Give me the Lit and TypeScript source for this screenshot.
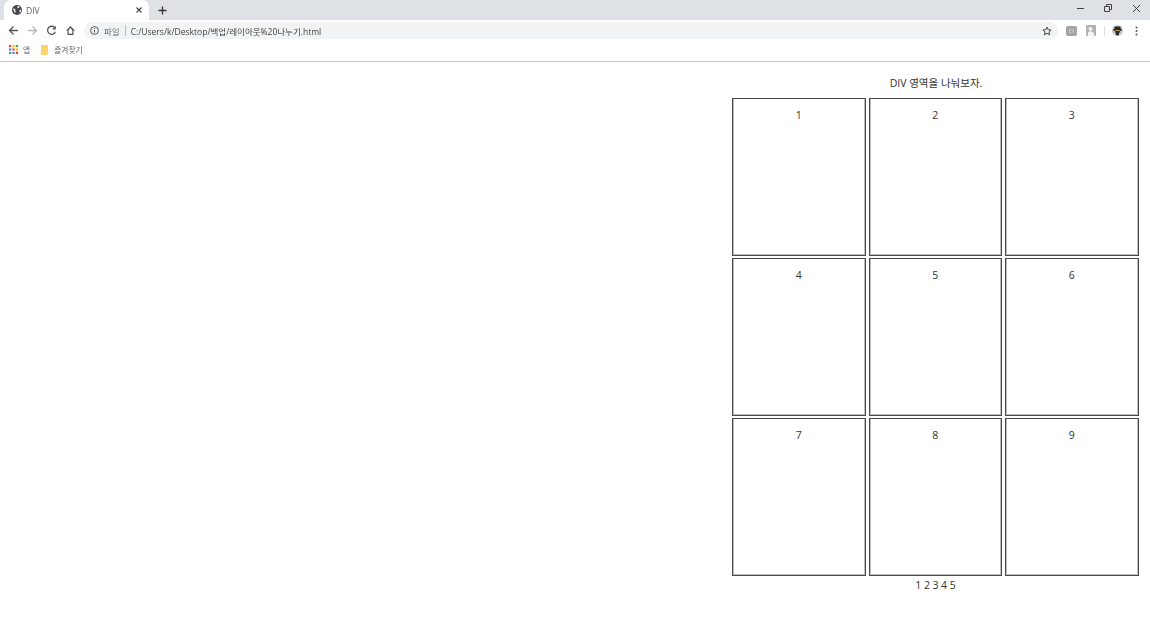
import { LitElement, html, css, svg } from "lit";
import { customElement } from "lit/decorators.js";

@customElement("app-root")
export class AppRoot extends LitElement {
  static styles = css`
    :host { display: block; width: 1150px; height: 629px; overflow: hidden; background: #fff;
      font-family: "Open Sans", "Noto Sans", "Noto Sans CJK KR", sans-serif; color: #222; }
    svg { display: block; flex: none; }
    .chrome { filter: blur(0.3px); }
    .tabstrip { height: 20px; background: #dee1e6; display: flex; position: relative; }
    .tab { width: 145px; margin-left: 4px; height: 20px; background: #fff; border-radius: 7px 7px 0 0;
      display: flex; align-items: center; box-sizing: border-box; padding: 0 6px 0 8px; }
    .tab-title { font-size: 8.5px; color: #5f6368; margin-left: 4px; flex: 1; }
    .plus { margin-left: 8.500px; margin-top: 5.500px; }
    .winctl { margin-left: auto; display: flex; align-items: flex-start; }
    .winbtn { width: 28px; height: 16px; display: flex; align-items: center; justify-content: center; }
    .toolbar { height: 21px; background: #fff; display: flex; align-items: center; padding-left: 8px; }
    .nav { width: 19px; display: flex; justify-content: flex-start; }
    .omni { width: 974px; height: 17px; background: #f1f3f4; border-radius: 9px; display: flex;
      align-items: center; box-sizing: border-box; padding: 0 6px; font-size: 8.5px; color: #444; }
    .file { margin-left: 5px; color: #666; }
    .sep { width: 1px; height: 11px; background: #bdc1c6; margin: 0 5px; }
    .url { flex: 1; }
    .exts { display: flex; align-items: center; margin-left: 5px; }
    .ext1 { width: 11px; height: 10px; background: #a3a5a8; border-radius: 2px; margin-left: 3px; color: #d8d8d8;
      font-size: 5px; text-align: center; line-height: 10px; }
    .ext2 { margin-left: 9px; }
    .tsep { width: 1px; height: 10px; background: #dadce0; margin-left: 8px; }
    .avatar { margin-left: 7px; }
    .dots { margin-left: 12px; }
    .bookmarks { height: 17px; padding-bottom: 3px; background: #fff; border-bottom: 1px solid #c8c8c8; display: flex;
      align-items: center; padding-left: 9px; font-size: 7.75px; color: #666; }
    .bm-apps { margin-right: 5px; }
    .bm-folder { margin-left: 10px; margin-right: 5px; }
    .page { display: flex; justify-content: flex-end; padding-right: 11px; }
    .panel { width: 407px; font-size: 10.5px; text-align: center; color: #333; }
    .title { height: 36px; line-height: 42px; padding-left: 1px; }
    .grid { display: grid; grid-template-columns: repeat(3, 133.5px); grid-auto-rows: 158px; gap: 2px 3px; }
    .cell { border: 1px solid #4a4a4a; box-shadow: inset 1px -1px 0 #bcbcbc, inset -1px 0 0 #bcbcbc;
      box-sizing: border-box; padding-top: 8px; line-height: 17px; }
    .pager { margin-top: 1px; line-height: 17px; display: flex; justify-content: center; gap: 2.6px; }
  `;

  render() {
    const appColors = ["#ea4335", "#fbbc04", "#34a853", "#4285f4", "#ea4335", "#fbbc04", "#34a853", "#4285f4", "#ea4335"];
    return html`
      <div class="chrome">
        <div class="tabstrip">
          <div class="tab">
            <svg width="10" height="10" viewBox="0 0 10 10">
              <circle cx="5" cy="5" r="5" fill="#45494e"/>
              <path d="M5.500 1l2 .5-.5 1.300-1.500.5zM7.500 5l1.800-.3-.5 2-1 1.300zM1.200 3.500l1.500.3.800 1.200-.3 1 .6 2-1.300-.7-1-2.300z" fill="#fff"/>
            </svg>
            <span class="tab-title">DIV</span>
            <svg width="8" height="8" viewBox="0 0 8 8"><path d="M1.500 1.500l5 5M6.500 1.500l-5 5" stroke="#444" stroke-width="1.100"/></svg>
          </div>
          <svg class="plus" width="9" height="9" viewBox="0 0 9 9"><path d="M4.500 .5v8M.5 4.500h8" stroke="#333" stroke-width="1.300"/></svg>
          <div class="winctl">
            <div class="winbtn"><svg width="8" height="8" viewBox="0 0 8 8"><path d="M1 4.500h7" stroke="#444"/></svg></div>
            <div class="winbtn"><svg width="8" height="8" viewBox="0 0 8 8"><path d="M.5 2.500h5v5h-5zM2.500 2.500V.5h5v5h-2" fill="none" stroke="#444"/></svg></div>
            <div class="winbtn"><svg width="9" height="9" viewBox="0 0 9 9"><path d="M1 1l7 7M8 1l-7 7" stroke="#444"/></svg></div>
          </div>
        </div>
        <div class="toolbar">
          <div class="nav"><svg width="11" height="11" viewBox="0 0 11 11"><path d="M10 5.500H1.500M5.500 1.500l-4 4 4 4" fill="none" stroke="#555" stroke-width="1.300"/></svg></div>
          <div class="nav"><svg width="11" height="11" viewBox="0 0 11 11"><path d="M1 5.500h8.500M5.500 1.500l4 4-4 4" fill="none" stroke="#b8babd" stroke-width="1.300"/></svg></div>
          <div class="nav"><svg width="11" height="11" viewBox="0 0 11 11"><path d="M9.300 6.800A4 4 0 1 1 8.500 2.500" fill="none" stroke="#555" stroke-width="1.300"/><path d="M9.800 .8v3.700H6.100z" fill="#555"/></svg></div>
          <div class="nav"><svg width="11" height="11" viewBox="0 0 11 11"><path d="M5.500 1L1 5.500h1.500v4.500h6V5.500H10zM3.700 8.800V5l1.800-2 1.800 2v3.800z" fill="#555" fill-rule="evenodd"/></svg></div>
          <div class="omni">
            <svg width="9" height="9" viewBox="0 0 9 9"><circle cx="4.500" cy="4.500" r="3.900" fill="none" stroke="#555"/><path d="M4.500 4v2.700M4.500 2.200v1" stroke="#555"/></svg>
            <span class="file">파일</span>
            <span class="sep"></span>
            <span class="url">C:/Users/k/Desktop/백업/레이아웃%20나누기.html</span>
            <svg width="10" height="10" viewBox="0 0 10 10"><path d="M5 1l1.200 2.700 2.900.3-2.200 1.900.7 2.900L5 7.300 2.400 8.800l.7-2.900L.9 4l2.900-.3z" fill="none" stroke="#444" stroke-width="1"/></svg>
          </div>
          <div class="exts">
            <div class="ext1">EX</div>
            <svg class="ext2" width="10" height="11" viewBox="0 0 10 11"><rect width="10" height="11" rx="1" fill="#b0b2b5"/><circle cx="4.500" cy="4" r="2" fill="#eef0f3"/><path d="M2 11V7.500L4.500 6 8 8v3z" fill="#f3f5f8"/></svg>
            <div class="tsep"></div>
            <svg class="avatar" width="11" height="11" viewBox="0 0 11 11"><circle cx="5.500" cy="5.500" r="5.500" fill="#c9cbce"/><path d="M2.500 1.500h6v2l1 .5v2H8L6.500 10.500 4 10 3 6H1.500V4l1-.5z" fill="#2a2a2a"/><rect x="3.500" y="5" width="4" height="1" fill="#c9a24a"/></svg>
            <svg class="dots" width="3" height="10" viewBox="0 0 3 10"><circle cx="1.500" cy="1.500" r="1" fill="#555"/><circle cx="1.500" cy="5" r="1" fill="#555"/><circle cx="1.500" cy="8.500" r="1" fill="#555"/></svg>
          </div>
        </div>
        <div class="bookmarks">
          <svg class="bm-apps" width="9" height="9" viewBox="0 0 9 9">
            ${appColors.map((c, i) => svg`<rect x=${(i % 3) * 3.4} y=${Math.floor(i / 3) * 3.4} width="2.200" height="2.200" fill=${c}/>`)}
          </svg>
          <span>앱</span>
          <svg class="bm-folder" width="9" height="10" viewBox="0 0 9 10"><rect x="1" y="0" width="7" height="10" rx="1" fill="#fbd46d"/></svg>
          <span>즐겨찾기</span>
        </div>
      </div>
      <div class="page">
        <div class="panel">
          <div class="title">DIV 영역을 나눠보자.</div>
          <div class="grid">
            ${[1, 2, 3, 4, 5, 6, 7, 8, 9].map((n) => html`<div class="cell">${n}</div>`)}
          </div>
          <div class="pager">${[1, 2, 3, 4, 5].map((n) => html`<span>${n}</span>`)}</div>
        </div>
      </div>
    `;
  }
}
